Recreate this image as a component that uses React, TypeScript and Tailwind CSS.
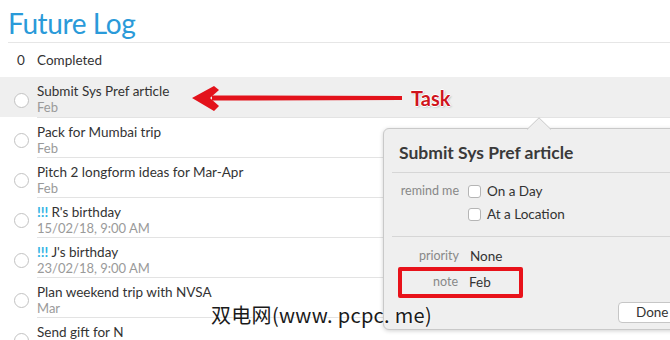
import React from "react";

interface Task {
  title: string;
  sub: string;
  urgent?: boolean;
}

const tasks: Task[] = [
  { title: "Submit Sys Pref article", sub: "Feb" },
  { title: "Pack for Mumbai trip", sub: "Feb" },
  { title: "Pitch 2 longform ideas for Mar-Apr", sub: "Feb" },
  { title: "R's birthday", sub: "15/02/18, 9:00 AM", urgent: true },
  { title: "J's birthday", sub: "23/02/18, 9:00 AM", urgent: true },
  { title: "Plan weekend trip with NVSA", sub: "Mar" },
  { title: "Send gift for N", sub: "" },
];

function Checkbox() {
  return <span className="inline-block w-[13px] h-[13px] rounded-[3px] border border-[#b5b5b5] bg-white shrink-0" />;
}

export default function App() {
  return (
    <div
      className="relative w-[670px] h-[340px] overflow-hidden bg-white text-[#333]"
      style={{ fontFamily: "Lato, 'Noto Sans', sans-serif" }}
    >
      {/* header */}
      <div className="ml-[8px] pt-[7px] pb-[3px] border-b border-[#e6e6e6]">
        <h1 className="text-[28px] leading-[32px] text-[#2a9ad9] tracking-[-0.4px]">Future Log</h1>
      </div>
      <div className="flex items-center h-[34px] text-[13.5px] text-[#333]">
        <span className="w-[37px] pl-[17px]">0</span>
        <span>Completed</span>
      </div>

      {/* list */}
      <div>
        {tasks.map((t, i) => (
          <div key={i} className={`flex h-[40px] ${i === 0 ? "bg-[#efefef]" : ""}`}>
            <div className="w-[37px] pl-[14px] pt-[16px]">
              <span className="block w-[15px] h-[15px] rounded-full border border-[#c2c2c2] bg-white" />
            </div>
            <div className={`flex-1 pt-[6px] ${i > 0 ? "border-t border-[#e3e3e3]" : ""}`}>
              <div className="text-[13.5px] leading-[16px] text-[#333]">
                {t.urgent && <span className="text-[#2fb3e3] font-bold mr-[3px]">!!!</span>}
                {t.title}
              </div>
              <div className="text-[13px] leading-[16px] text-[#9a9a9a]">{t.sub}</div>
            </div>
          </div>
        ))}
      </div>

      {/* red arrow annotation */}
      <svg className="absolute left-[188px] top-[84px]" width="220" height="30" viewBox="0 0 220 30">
        <path d="M24 11.5 L214 12 L214 16 L24 16.5 Z" fill="#e3121b" />
        <path d="M4 14 L26 2 L31 6 L22 14 L31 22 L26 27 Z" fill="#e3121b" />
      </svg>
      <div
        className="absolute left-[411px] top-[85px] text-[20px] font-bold text-[#cf151d] leading-[26px]"
        style={{ textShadow: "1px 0 #fff, -1px 0 #fff, 0 1px #fff, 0 -1px #fff, 1px 1px 2px #8aa" }}
      >
        Task
      </div>

      {/* popover */}
      <div className="absolute left-[383px] top-[128px] w-[300px] h-[202px] bg-[#efefef] border border-[#c9c9c9] rounded-[6px] shadow-[0_1px_4px_rgba(0,0,0,0.18)]">
        <svg className="absolute left-[143px] -top-[12px]" width="24" height="13" viewBox="0 0 24 13">
          <path d="M0 12.5 L12 0.8 L24 12.5" fill="#efefef" stroke="#c9c9c9" strokeWidth="1" />
        </svg>
        <div className="ml-[8px] pl-[7px] pt-[13px] pb-[8px] border-b border-[#d6d6d6]">
          <div className="text-[17.5px] font-bold text-[#3a3a3a] leading-[22px]">Submit Sys Pref article</div>
        </div>
        <div className="pt-[7px] pb-[11px] ml-[8px] border-b border-[#d6d6d6]">
          <div className="flex items-center h-[22px]">
            <span className="w-[67px] text-right text-[12.5px] text-[#888]">remind me</span>
            <span className="ml-[9px] flex items-center gap-[6px] text-[13.5px] text-[#333]">
              <Checkbox />
              On a Day
            </span>
          </div>
          <div className="flex items-center h-[22px] mt-[1px]">
            <span className="w-[67px]" />
            <span className="ml-[9px] flex items-center gap-[6px] text-[13.5px] text-[#333]">
              <Checkbox />
              At a Location
            </span>
          </div>
        </div>
        <div className="pt-[9px] ml-[8px]">
          <div className="flex items-center h-[21px]">
            <span className="w-[67px] text-right text-[12.5px] text-[#888]">priority</span>
            <span className="ml-[11px] text-[13.5px] text-[#333]">None</span>
          </div>
          <div className="flex items-center h-[31px] ml-[6px] w-[125px] border-[4px] border-[#e8121a] rounded-[2px]">
            <span className="w-[56px] text-right text-[12.5px] text-[#888]">note</span>
            <span className="ml-[11px] text-[13.5px] text-[#333]">Feb</span>
          </div>
        </div>
        <button className="absolute left-[234px] top-[173px] h-[21px] w-[60px] bg-white border border-[#c6c6c6] rounded-[4px] text-[13.5px] text-[#333] leading-[19px] text-left pl-[17px]">
          Done
        </button>
      </div>

      {/* watermark */}
      <div
        className="absolute left-[211px] top-[301px] text-[20px] text-[#1a1a1a] leading-[28px] tracking-[0.3px]"
        style={{ fontFamily: "'Noto Sans CJK SC', 'DejaVu Sans', sans-serif", textShadow: "0 0 2px #fff, 0 0 3px #fff" }}
      >
        双电网(www. pcpc. me)
      </div>
    </div>
  );
}
